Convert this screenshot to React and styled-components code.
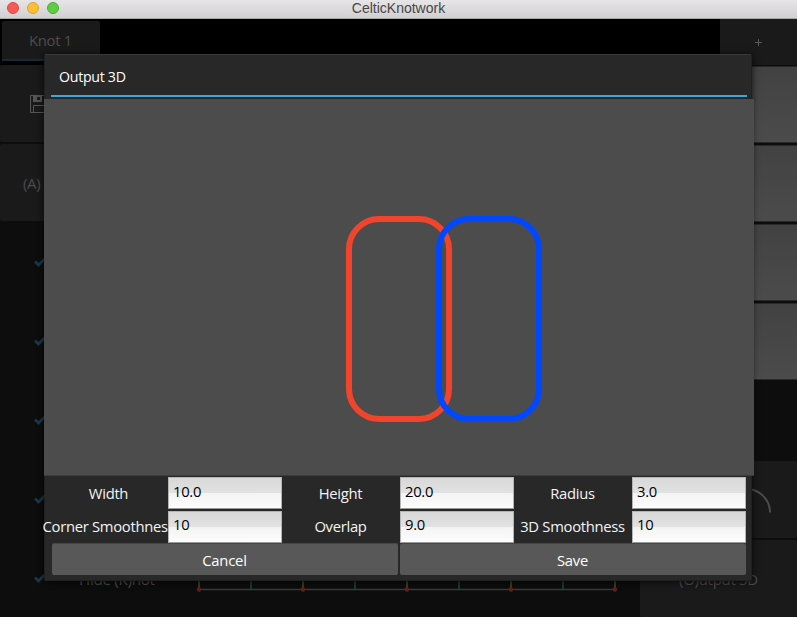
import React from "react";
import styled, { createGlobalStyle } from "styled-components";

const Global = createGlobalStyle`
  * { box-sizing: border-box; }
  body {
    margin: 0;
    background: #0d0d0d;
    overflow: hidden;
    font-family: "Open Sans", "Noto Sans", sans-serif;
    letter-spacing: -0.3px;
  }
`;

const Window = styled.div`
  position: relative;
  display: flex;
  flex-direction: column;
  width: 797px;
  height: 617px;
  overflow: hidden;
  background: #0d0d0d;
`;

const TitleBar = styled.header`
  display: grid;
  grid-template-columns: 1fr auto 1fr;
  align-items: center;
  flex: none;
  height: 19px;
  padding: 0 7px 2px;
  background: linear-gradient(#e7e5e7, #d1cfd1);
  border-bottom: 1px solid #a9a9a9;
`;

const Lights = styled.div`
  display: flex;
  gap: 8px;
`;

const Light = styled.span`
  width: 12px;
  height: 12px;
  border-radius: 50%;
  background: ${(p) => p.$fill};
  border: 1px solid ${(p) => p.$edge};
`;

const Title = styled.h1`
  margin: 0;
  padding-top: 1px;
  font: 400 14px/15px "Liberation Sans", Arial, sans-serif;
  letter-spacing: 0;
  color: #474747;
`;

const TabStrip = styled.nav`
  display: flex;
  justify-content: space-between;
  flex: none;
  height: 46px;
  padding-left: 2px;
  background: #000;
`;

const Tab = styled.div`
  width: 98px;
  height: 40px;
  margin-top: 2px;
  padding: 0 1px 1px 0;
  display: flex;
  align-items: center;
  justify-content: center;
  border-radius: 2px 2px 0 0;
  background: #1a1a1a;
  border-bottom: 2px solid #152d38;
  color: #4c4c4c;
  font-size: 14.9px;
`;

const AddTab = styled.div`
  width: 77px;
  height: 46px;
  display: flex;
  align-items: center;
  justify-content: center;
  background: #1a1a1a;
`;

const Workspace = styled.main`
  display: grid;
  grid-template-columns: 158px 1fr 157px;
  flex: 1;
`;

const Column = styled.div`
  display: grid;
  grid-template-rows: repeat(7, 79px);
  min-width: 0;
`;

const SideButton = styled.div`
  height: 77px;
  margin-top: ${(p) => (p.$low ? 1 : 0)}px;
  padding-top: 1px;
  padding-left: ${(p) => p.$inset || 0}px;
  display: flex;
  align-items: center;
  justify-content: ${(p) => (p.$center ? "center" : "flex-start")};
  border-radius: 2px;
  background: #1a1a1a;
  color: #4c4c4c;
  font-size: 15px;
`;

const CheckRow = styled.div`
  display: flex;
  align-items: center;
  padding-left: 34px;
  color: #4c4c4c;
  font-size: 15.2px;
  white-space: nowrap;
`;

const CheckLabel = styled.span`
  margin-left: 33px;
`;

const Swatch = styled.div`
  height: 77px;
  margin-top: 1px;
  border: solid #292929;
  border-width: 1px 0;
  background: linear-gradient(#424242, #4b4b4b);
`;

const Spacer = styled.div``;

const Canvas = styled.div`
  display: flex;
  align-items: flex-end;
  padding: 0 0 25px 38px;
`;

const Modal = styled.section`
  position: absolute;
  left: 44px;
  top: 54px;
  width: 708px;
  height: 527px;
  display: flex;
  flex-direction: column;
  background: #282828;
  border: 1px solid #202020;
  border-top-color: #3a3a3a;
  border-radius: 2px;
  box-shadow: 0 1px 7px rgba(0, 0, 0, 0.75);
`;

const ModalHead = styled.div`
  flex: none;
  height: 42px;
  margin: 0 4px 0 6px;
  padding: 11px 8px 0;
  border-bottom: 2px solid #47a3d1;
  color: #fff;
  font-size: 14.2px;
  line-height: 22px;
`;

const Preview = styled.div`
  flex: none;
  width: 710px;
  height: 377px;
  margin: 2px 0 0 -1px;
  background: #4c4c4c;
  border-bottom: 1px solid #3c3c3c;
`;

const Form = styled.div`
  display: grid;
  grid-template-columns: repeat(6, 114px);
  grid-auto-rows: 32px;
  gap: 2px;
  margin: 1px 0 0 7px;
`;

const Label = styled.label`
  display: flex;
  align-items: center;
  justify-content: center;
  padding: ${(p) => (p.$first ? "0 1px 1px 0" : "0 1px 3px 0")};
  color: #f4f4f4;
  font-size: 14.8px;
  white-space: nowrap;
`;

const Field = styled.input`
  position: relative;
  width: 114px;
  height: 32px;
  padding: 0 4px ${(p) => (p.$first ? 5 : 7)}px;
  border: 1px solid #9c9c9c;
  border-color: #b5b5b5 #b5b5b5 #999;
  border-radius: 0;
  outline: 0;
  background: linear-gradient(#d8d8d8, #e2e2e2 50%, #f3f3f3 51%, #fdfdfd);
  color: #000;
  font: 14.8px "Open Sans", "Noto Sans", sans-serif;
  letter-spacing: -0.3px;
`;

const Actions = styled.div`
  display: grid;
  grid-template-columns: 346px 346px;
  gap: 2px;
  margin: 0 0 0 7px;
`;

const Action = styled.button`
  height: 32px;
  padding: 0 1px 0 0;
  border: 0;
  border-top: 1px solid #464646;
  border-radius: 2px;
  background: #585858;
  color: #fff;
  font: 14.8px "Open Sans", "Noto Sans", sans-serif;
  letter-spacing: -0.2px;
`;

const Check = () => (
  <svg width="12" height="9" viewBox="0 0 12 9" fill="none">
    <path d="M1 3.5 L4.5 7 L10.5 1" stroke="#173849" strokeWidth="2.8" />
  </svg>
);

const Floppy = () => (
  <svg width="18" height="18" viewBox="0 0 18 18" fill="none" stroke="#555">
    <path d="M.5 .5H14L17.5 4V17.5H.5Z M3.5 17.5V10.5H14.5V17.5" />
    <path d="M3 .5H12V7H3Z M7 2V5H10V2Z" fill="#555" fillRule="evenodd" stroke="none" />
  </svg>
);

const Ruler = () => (
  <svg width="422" height="24" viewBox="196 568 422 24">
    <path d="M199 588.5H615" stroke="#3a3a3a" strokeWidth="1.6" />
    {[0, 1, 2, 3, 4, 5, 6, 7, 8].map((i) => (
      <path
        key={i}
        d={`M${199 + i * 52} 568V588`}
        stroke={i % 2 ? "#123b3b" : i % 4 ? "#443b10" : "#3a3a3a"}
        strokeWidth="2"
      />
    ))}
    {[0, 2, 4, 6, 8].map((i) => (
      <circle key={i} cx={199 + i * 52} cy="588.5" r="2.2" fill="#681d15" />
    ))}
  </svg>
);

const Arc = () => (
  <svg width="50" height="50" viewBox="722 475 50 50" fill="none">
    <path d="M746.5 489A23.5 23.5 0 0 1 770 512.5" stroke="#4c4c4c" strokeWidth="2" />
  </svg>
);

const Knot = () => (
  <svg width="710" height="376" viewBox="44 99 710 376" fill="none" strokeWidth="6">
    <rect x="349" y="219" width="100" height="200" rx="30" stroke="#f0452c" />
    <rect x="439" y="219" width="100" height="200" rx="30" stroke="#0048ff" />
  </svg>
);

const fields = [
  ["Width", "10.0"],
  ["Height", "20.0"],
  ["Radius", "3.0"],
  ["Corner Smoothness", "10"],
  ["Overlap", "9.0"],
  ["3D Smoothness", "10"],
];

export default function App() {
  return (
    <Window>
      <Global />
      <TitleBar>
        <Lights>
          <Light $fill="#f25b56" $edge="#dc4a45" />
          <Light $fill="#fbbe34" $edge="#dfa02b" />
          <Light $fill="#5fcd42" $edge="#4bae32" />
        </Lights>
        <Title>CelticKnotwork</Title>
      </TitleBar>
      <TabStrip>
        <Tab>Knot 1</Tab>
        <AddTab>
          <svg width="7" height="7" viewBox="0 0 7 7">
            <path d="M0 3.5H7M3.5 0V7" stroke="#5a5a5a" />
          </svg>
        </AddTab>
      </TabStrip>
      <Workspace>
        <Column>
          <SideButton $inset={30}><Floppy /></SideButton>
          <SideButton $inset={23}>(A)</SideButton>
          <CheckRow><Check /></CheckRow>
          <CheckRow><Check /></CheckRow>
          <CheckRow><Check /></CheckRow>
          <CheckRow><Check /></CheckRow>
          <CheckRow><Check /><CheckLabel>Hide (K)not</CheckLabel></CheckRow>
        </Column>
        <Canvas><Ruler /></Canvas>
        <Column>
          <Swatch />
          <Swatch />
          <Swatch />
          <Swatch />
          <Spacer />
          <SideButton $low $inset={82}><Arc /></SideButton>
          <SideButton $low $center>(O)utput 3D</SideButton>
        </Column>
      </Workspace>
      <Modal>
        <ModalHead>Output 3D</ModalHead>
        <Preview><Knot /></Preview>
        <Form>
          {fields.map(([name, value], i) => (
            <React.Fragment key={name}>
              <Label $first={i < 3}>{name}</Label>
              <Field $first={i < 3} defaultValue={value} aria-label={name} />
            </React.Fragment>
          ))}
        </Form>
        <Actions>
          <Action>Cancel</Action>
          <Action>Save</Action>
        </Actions>
      </Modal>
    </Window>
  );
}
